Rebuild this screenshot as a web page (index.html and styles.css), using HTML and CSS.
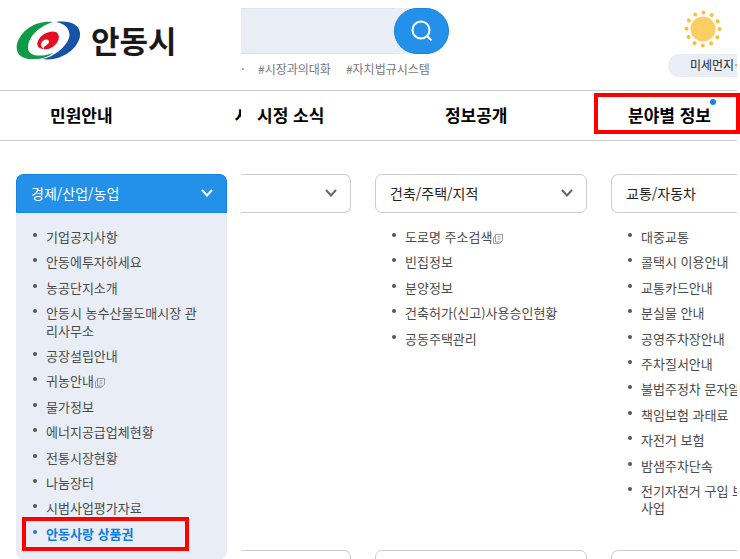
FILE: index.html
```html
<!DOCTYPE html>
<html lang="ko">
<head>
  <meta charset="UTF-8" />
  <title>안동시</title>
  <link rel="stylesheet" href="styles.css">
</head>
<body>
  <svg class="defs" aria-hidden="true">
    <symbol id="chevron" viewBox="0 0 12 8">
      <path d="M1 1 L6 6.500 L11 1" fill="none" stroke="currentColor" stroke-width="2"/>
    </symbol>
    <symbol id="new-window" viewBox="0 0 10 10">
      <path d="M2.500 .5 H9.500 V6.500 L7.500 8 H2.500 Z M2.500 2 L.5 3.500 V9.500 H6.500 L8 8 M4.500 2.800 H7.500 M4.500 5 H7.500" fill="none" stroke="currentColor"/>
    </symbol>
  </svg>

  <header class="header">
    <a class="logo" href="#">
      <svg class="logo-mark" viewBox="0 0 64 39" aria-hidden="true">
        <path fill="#0d9b48" d="M37 1 C20 -1 5 9 1 23 C-1 33 6 39 18 38 C26 38 32 36 37 32 C26 36 12 36 12 27 C12 15 24 5 37 1 Z"/>
        <path fill="#1652a6" d="M40 1 C55 -1 65 4 64 15 C62 28 45 41 26 38 C38 36 50 26 53 17 C55 9 50 3 40 1 Z"/>
        <path fill="#e60f22" d="M28 28 C22 28 20 24 22 20 C25 13 34 9 40 11 C45 14 43 21 38 25 C35 27 32 29 28 28 C26 25 34 24 33 20 C31 17 26 19 25 23 C25 25 26 27 28 28 Z"/>
      </svg>
      <span class="logo-text">안동시</span>
    </a>
    <div class="header-right">
      <div class="search-area">
        <form class="search">
          <input class="search-input" type="text" aria-label="검색어">
          <button class="search-button" type="button" aria-label="검색">
            <svg viewBox="0 0 22 22" width="22" height="22" aria-hidden="true">
              <circle cx="10" cy="10" r="8.500" fill="none" stroke="#fff" stroke-width="2"/>
              <path d="M15.500 15.500 L20.500 20.500" stroke="#fff" stroke-width="2"/>
            </svg>
          </button>
        </form>
        <div class="tags">
          <span class="tag-dot">·</span>
          <a href="#">#시장과의대화</a>
          <a href="#">#자치법규시스템</a>
        </div>
      </div>
      <div class="weather">
        <svg viewBox="0 0 38 38" width="38" height="38" aria-hidden="true">
          <circle cx="19" cy="19" r="12.500" fill="#fdce63"/>
          <circle cx="19" cy="19" r="16.500" fill="none" stroke="#fdc12f" stroke-width="4" stroke-linecap="round" stroke-dasharray="0.01 8.629"/>
        </svg>
        <div class="dust">미세먼지<b>·</b></div>
      </div>
    </div>
  </header>

  <nav class="nav">
    <div class="nav-left">
      <a href="#">민원안내</a>
      <a href="#">시</a>
    </div>
    <div class="nav-right">
      <a href="#">시정 소식</a>
      <a href="#">정보공개</a>
      <a class="nav-current" href="#">분야별 정보</a>
    </div>
  </nav>

  <main class="menu">
    <section class="card card-open">
      <button class="card-head" type="button">경제/산업/농업<svg class="chevron"><use href="#chevron"/></svg></button>
      <ul class="list">
        <li><a href="#">기업공지사항</a></li>
        <li><a href="#">안동에투자하세요</a></li>
        <li><a href="#">농공단지소개</a></li>
        <li><a href="#">안동시 농수산물도매시장 관<br>리사무소</a></li>
        <li><a href="#">공장설립안내</a></li>
        <li><a href="#">귀농안내<svg class="new-window"><use href="#new-window"/></svg></a></li>
        <li><a href="#">물가정보</a></li>
        <li><a href="#">에너지공급업체현황</a></li>
        <li><a href="#">전통시장현황</a></li>
        <li><a href="#">나눔장터</a></li>
        <li><a href="#">시범사업평가자료</a></li>
        <li class="selected"><a href="#">안동사랑 상품권</a></li>
      </ul>
    </section>

    <div class="cards">
      <section class="card card-cut-left">
        <button class="card-head" type="button" aria-label="펼치기"><svg class="chevron"><use href="#chevron"/></svg></button>
      </section>
      <section class="card">
        <button class="card-head" type="button">건축/주택/지적<svg class="chevron"><use href="#chevron"/></svg></button>
        <ul class="list">
          <li><a href="#">도로명 주소검색<svg class="new-window"><use href="#new-window"/></svg></a></li>
          <li><a href="#">빈집정보</a></li>
          <li><a href="#">분양정보</a></li>
          <li><a href="#">건축허가(신고)사용승인현황</a></li>
          <li><a href="#">공동주택관리</a></li>
        </ul>
      </section>
      <section class="card card-cut-right">
        <button class="card-head" type="button">교통/자동차</button>
        <ul class="list">
          <li><a href="#">대중교통</a></li>
          <li><a href="#">콜택시 이용안내</a></li>
          <li><a href="#">교통카드안내</a></li>
          <li><a href="#">분실물 안내</a></li>
          <li><a href="#">공영주차장안내</a></li>
          <li><a href="#">주차질서안내</a></li>
          <li><a href="#">불법주정차 문자알</a></li>
          <li><a href="#">책임보험 과태료</a></li>
          <li><a href="#">자전거 보험</a></li>
          <li><a href="#">밤샘주차단속</a></li>
          <li><a href="#">전기자전거 구입 보<br>사업</a></li>
        </ul>
      </section>
      <section class="card card-cut-left"><div class="card-head"></div></section>
      <section class="card"><div class="card-head"></div></section>
      <section class="card card-cut-right"><div class="card-head"></div></section>
    </div>
  </main>
</body>
</html>
```

FILE: styles.css
```css
*,
*::before,
*::after {
  box-sizing: border-box;
}

body {
  display: flex;
  flex-direction: column;
  height: 100vh;
  margin: 0;
  padding-right: 3px;
  overflow: hidden;
  background: #fff;
  color: #222;
  font-family: "Noto Sans CJK KR", sans-serif;
}

a {
  color: inherit;
  text-decoration: none;
}

button,
input {
  font-family: inherit;
}

.defs {
  position: absolute;
  width: 0;
  height: 0;
}

/* header */
.header {
  display: flex;
  flex: none;
  height: 91px;
  border-bottom: 1px solid #ccc;
}

.logo {
  display: flex;
  flex: none;
  align-items: center;
  gap: 11px;
  width: 241px;
  padding: 0 0 10px 16px;
}

.logo-mark {
  width: 64px;
  height: 39px;
}

.logo-text {
  color: #1c1819;
  font-size: 31px;
  font-weight: 700;
  line-height: 36px;
}

.header-right {
  display: flex;
  flex: 1;
  justify-content: space-between;
  min-width: 0;
  padding-top: 8px;
}

.search {
  display: flex;
  width: 208px;
  height: 46px;
  border-radius: 0 23px 23px 0;
  background: #e9eef6;
}

.search-input {
  flex: 1;
  min-width: 0;
  border: 1px solid #d9e3ee;
  border-width: 1px 0;
  background: none;
}

.search-button {
  display: flex;
  align-items: center;
  justify-content: center;
  width: 55px;
  padding: 0;
  border: 1px solid #1583e0;
  border-radius: 23px;
  background: #2391ea;
}

.tags {
  display: flex;
  gap: 15px;
  margin-top: 6px;
  color: #777;
  font-size: 12px;
  line-height: 18px;
  white-space: nowrap;
}

.tag-dot {
  width: 2px;
}

.weather {
  display: flex;
  flex-direction: column;
  align-items: center;
  width: 69px;
  padding-top: 2px;
}

.dust {
  width: 100%;
  height: 23px;
  margin-top: 6px;
  padding-left: 22px;
  border-radius: 12px 0 0 12px;
  background: #e9eef6;
  font-size: 12px;
  line-height: 22px;
  white-space: nowrap;
  overflow: hidden;
}

.dust b {
  color: #f0a030;
}

/* main navigation */
.nav {
  display: flex;
  flex: none;
  height: 50px;
  border-bottom: 1px solid #ccc;
  color: #000;
  font-size: 17px;
  font-weight: 700;
  line-height: 48px;
  white-space: nowrap;
}

.nav-left {
  display: flex;
  flex: none;
  gap: 122px;
  width: 241px;
  padding-left: 50px;
  overflow: hidden;
}

.nav-right {
  display: flex;
  flex: 1;
  justify-content: space-between;
  padding: 0 26px 0 16px;
}

.nav-current {
  position: relative;
}

.nav-current::before {
  content: "";
  position: absolute;
  top: 8px;
  right: -5px;
  width: 6px;
  height: 6px;
  border-radius: 50%;
  background: #1583e0;
}

.nav-current::after {
  content: "";
  position: absolute;
  top: 2px;
  right: -29px;
  left: -34px;
  height: 41px;
  border: 4px solid #f00;
}

/* category cards */
.menu {
  display: flex;
  flex: 1;
  align-items: flex-start;
  gap: 14px;
  min-height: 0;
  padding: 33px 0 0 16px;
  overflow: hidden;
}

.cards {
  display: grid;
  flex: 1;
  grid-template-columns: 110fr 212fr 126fr;
  gap: 16px 24px;
  min-width: 0;
}

.card {
  min-width: 0;
  overflow: hidden;
}

.card-head {
  display: flex;
  align-items: center;
  justify-content: space-between;
  width: 100%;
  height: 39px;
  padding: 0 13px 2px 14px;
  border: 1px solid #ccc;
  border-radius: 7px;
  background: #fff;
  color: #222;
  font-size: 14px;
  line-height: 20px;
  white-space: nowrap;
}

.card-cut-left .card-head {
  justify-content: flex-end;
  border-left: 0;
  border-radius: 0 7px 7px 0;
}

.card-cut-right .card-head {
  border-right: 0;
  border-radius: 7px 0 0 7px;
}

.chevron {
  width: 12px;
  height: 8px;
  color: #666;
}

.card-open {
  flex: none;
  width: 211px;
  border-radius: 7px;
  background: #e9eef6;
}

.card-open .card-head {
  border-color: #1583e0;
  border-radius: 7px 7px 0 0;
  background: #2391ea;
  color: #fff;
}

.card-open .chevron {
  color: #fff;
}

.list {
  display: flex;
  flex-direction: column;
  gap: 8px;
  margin: 0;
  padding: 15px 0 17px 30px;
  color: #4a4a4a;
  font-size: 13px;
  line-height: 1.34;
  list-style: none;
  white-space: nowrap;
}

.list li {
  position: relative;
}

.list li::before {
  content: "";
  position: absolute;
  top: 5px;
  left: -13px;
  width: 4px;
  height: 4px;
  border-radius: 50%;
  background: #555;
}

.new-window {
  width: 10px;
  height: 10px;
  margin-left: 1px;
  color: #999;
  vertical-align: -2px;
}

.list .selected {
  color: #0b7de6;
  font-weight: 700;
}

.list .selected::before {
  background: #0b7de6;
}

.selected::after {
  content: "";
  position: absolute;
  top: -8px;
  left: -24px;
  width: 167px;
  height: 34px;
  border: 4px solid #f00;
}
```
